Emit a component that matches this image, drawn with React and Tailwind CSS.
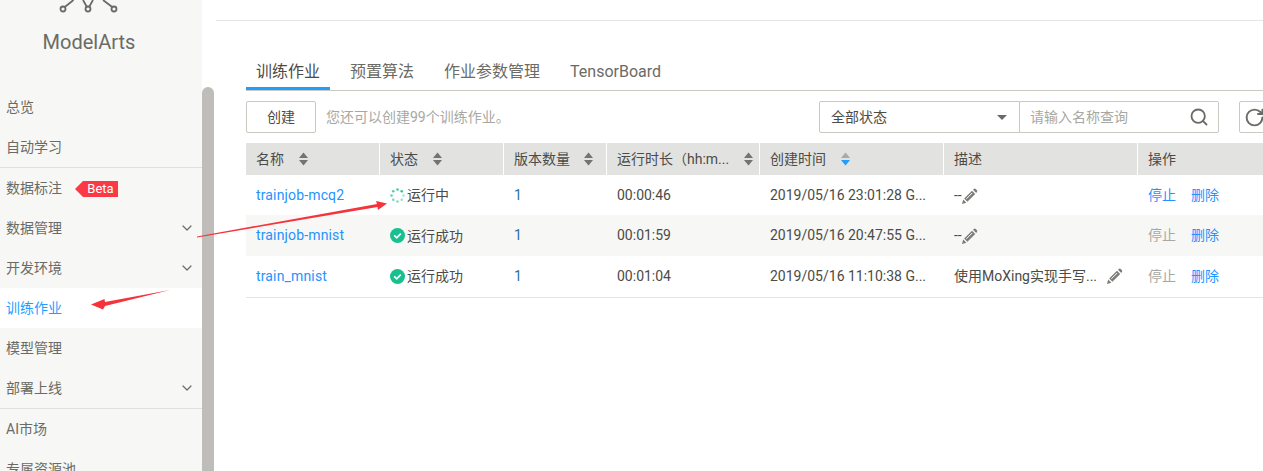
import React from "react";
import { ChevronDown, Search, RotateCw } from "lucide-react";

const FONT = "[font-family:Roboto,'Noto_Sans_CJK_SC',sans-serif]";

function MenuItem({ label, chevron, active, badge }) {
  return (
    <div className={`h-10 shrink-0 flex items-center pl-[6px] pr-[7px] text-[14px] ${active ? "bg-white text-[#1e9fff]" : "text-[#6b6b66]"}`}>
      <span>{label}</span>
      {badge && (
        <span className="ml-[13px] mt-[2px] flex items-center">
          <span className="w-0 h-0 border-y-[8px] border-y-transparent border-r-[8px] border-r-[#fc3a46]" />
          <span className="h-4 w-[35px] bg-[#fc3a46] text-white text-[13px] leading-4 text-center">Beta</span>
        </span>
      )}
      {chevron && <ChevronDown className="ml-auto text-[#6b6b66]" size={16} strokeWidth={1.8} />}
    </div>
  );
}

function SortIcon({ active }) {
  return (
    <svg width="9" height="14" viewBox="0 0 9 14" className="shrink-0">
      <path d="M4.5 0.5 L9 6 H0 Z" fill={active ? "#a9a9a5" : "#74746f"} />
      <path d="M4.5 13.5 L9 8 H0 Z" fill={active ? "#1e9fff" : "#74746f"} />
    </svg>
  );
}

function Pencil() {
  return (
    <svg width="17" height="17" viewBox="0 0 17 17" className="shrink-0">
      <path d="M1 16 L2.2 11.6 L5.4 14.8 Z" fill="#7c7c78" />
      <path d="M3.2 10.6 L11 2.8 L14.2 6 L6.4 13.8 Z" fill="#7c7c78" />
      <path d="M12 1.8 L13.2 0.8 Q14 0.3 14.7 1 L16 2.3 Q16.6 3 16 3.8 L15.2 5 Z" fill="#7c7c78" />
      <path d="M5.4 10.8 L11.2 5" stroke="#fff" strokeWidth="1" />
    </svg>
  );
}

function Spinner() {
  const dots = [0, 45, 90, 135, 180, 225, 270, 315];
  return (
    <svg width="15" height="15" viewBox="-7.5 -7.5 15 15" className="shrink-0">
      {dots.map((a, i) => (
        <circle key={a} r="1.3" cx={6 * Math.cos((a * Math.PI) / 180)} cy={6 * Math.sin((a * Math.PI) / 180)} fill="#16c89b" opacity={0.4 + i * 0.08} />
      ))}
    </svg>
  );
}

function Check() {
  return (
    <svg width="15" height="15" viewBox="0 0 15 15" className="shrink-0">
      <circle cx="7.5" cy="7.5" r="7.5" fill="#16c08f" />
      <path d="M4.2 7.4 L6.7 9.8 L10.8 5.6" fill="none" stroke="#fff" strokeWidth="1.7" />
    </svg>
  );
}

const COLS = "grid grid-cols-[133px_123px_102px_152px_183px_193px_126px] gap-x-px";

const HEADERS = [
  { t: "名称", gap: "ml-[15px]" },
  { t: "状态", gap: "ml-[15px]" },
  { t: "版本数量", gap: "ml-[14px]" },
  { t: "运行时长（hh:m...", gap: "ml-[15px]" },
  { t: "创建时间", gap: "ml-[15px]", active: true },
  { t: "描述" },
  { t: "操作" },
];

const ROWS = [
  { name: "trainjob-mcq2", status: "运行中", run: true, dur: "00:00:46", time: "2019/05/16 23:01:28 G...", desc: "--", stop: true, h: "h-10" },
  { name: "trainjob-mnist", status: "运行成功", statusShift: "mt-px", dur: "00:01:59", time: "2019/05/16 20:47:55 G...", desc: "--", h: "h-[41px] pb-px", bg: "bg-[#f7f7f5]" },
  { name: "train_mnist", status: "运行成功", dur: "00:01:04", time: "2019/05/16 11:10:38 G...", desc: "使用MoXing实现手写...", long: true, h: "h-[41px] pb-px" },
];

export default function App() {
  return (
    <div className={`w-[1263px] h-[471px] relative overflow-hidden bg-white flex ${FONT}`}>
      {/* Sidebar */}
      <div className="w-[202px] h-full shrink-0 bg-[#f7f7f5] flex flex-col overflow-hidden">
        <div className="h-[87px] shrink-0 flex flex-col items-center pr-[24px]">
          <svg width="64" height="13" viewBox="0 0 64 13" className="ml-[2px]">
            <g fill="none" stroke="#6b6b66" strokeWidth="1.8">
              <circle cx="5" cy="9" r="2.5" />
              <circle cx="30" cy="9" r="2.5" />
              <circle cx="56" cy="9" r="2.5" />
              <path d="M6.8 7 L15.5 0 M28.8 6.8 L25 0 M31.2 6.8 L35 0 M54.2 7 L45 0" />
            </g>
          </svg>
          <div className="text-[20px] leading-7 text-[#6b6b66] mt-[15px]">ModelArts</div>
        </div>
        <MenuItem label="总览" />
        <MenuItem label="自动学习" />
        <div className="h-px shrink-0 bg-[#e0e0de]" />
        <MenuItem label="数据标注" badge />
        <MenuItem label="数据管理" chevron />
        <MenuItem label="开发环境" chevron />
        <MenuItem label="训练作业" active />
        <MenuItem label="模型管理" />
        <MenuItem label="部署上线" chevron />
        <div className="h-px shrink-0 bg-[#e0e0de]" />
        <MenuItem label="AI市场" />
        <MenuItem label="专属资源池" />
      </div>

      {/* Scrollbar */}
      <div className="w-3 shrink-0 mt-[87px] bg-[#bfbdba] rounded-t-[6px]" />

      {/* Main */}
      <div className="flex-1 min-w-0 ml-[2px] flex flex-col">
        <div className="h-5 shrink-0 border-b border-[#e5e5e3] box-content" />
        <div className="pl-[30px] flex flex-col">
          {/* Tabs */}
          <div className="mt-[30px] h-[40px] flex gap-[10px] border-b border-[#ccc9c3] text-[16px] box-border">
            <div className="h-[39px] pt-[9px] px-[10px] leading-[24px] text-[#4b4b47] border-b-[3px] border-[#1e9fff]">训练作业</div>
            <div className="px-[10px] pt-[9px] leading-[24px] text-[#6b6b66]">预置算法</div>
            <div className="px-[10px] pt-[9px] leading-[24px] text-[#6b6b66]">作业参数管理</div>
            <div className="px-[10px] pt-[9px] leading-[24px] text-[#6b6b66]">TensorBoard</div>
          </div>

          {/* Toolbar */}
          <div className="mt-[10px] h-8 flex items-center">
            <div className="w-[70px] h-8 border border-[#ccc9c3] rounded-[2px] flex items-center justify-center text-[14px] text-[#4b4b47]">创建</div>
            <div className="ml-[10px] text-[14px] text-[#a8a8a3]">您还可以创建99个训练作业。</div>
            <div className="ml-auto flex items-center">
              <div className="w-[201px] h-8 border border-[#ccc9c3] rounded-l-[2px] flex items-center pl-[11px] pr-[12px] text-[14px] text-[#4b4b47]">
                <span>全部状态</span>
                <span className="ml-auto w-0 h-0 border-x-[5px] border-x-transparent border-t-[5px] border-t-[#6b6b66]" />
              </div>
              <div className="w-[200px] h-8 border border-[#ccc9c3] rounded-[2px] -ml-px flex items-center pl-[10px] pr-[9px] text-[14px] text-[#a8a8a3]">
                <span>请输入名称查询</span>
                <Search className="ml-auto text-[#6b6b66]" size={20} strokeWidth={2.2} />
              </div>
              <div className="w-[32px] h-8 ml-[20px] -mr-[8px] border border-[#ccc9c3] rounded-[2px] flex items-center pl-[4px] text-[#6b6b66] bg-white overflow-hidden">
                <RotateCw className="shrink-0" size={21} strokeWidth={2.2} />
              </div>
            </div>
          </div>

          {/* Table */}
          <div className="mt-[10px] w-[1017px] overflow-hidden text-[14px] leading-5">
            <div className={`${COLS} h-8 bg-white`}>
              {HEADERS.map((h) => (
                <div key={h.t} className="bg-[#e2e3e1] pl-[10px] flex items-center text-[#4b4b47] whitespace-nowrap">
                  <span>{h.t}</span>
                  {h.gap && <span className={`${h.gap} flex`}><SortIcon active={h.active} /></span>}
                </div>
              ))}
            </div>
            {ROWS.map((r) => (
              <div key={r.name} className={`${COLS} ${r.h} ${r.bg || ""} items-center whitespace-nowrap text-[#4b4b47]`}>
                <div className="pl-[10px] text-[#1f93ff] tracking-[0.15px]">{r.name}</div>
                <div className={`pl-[10px] flex items-center gap-[2px] ${r.statusShift || ""}`}>
                  {r.run ? <Spinner /> : <Check />}
                  <span>{r.status}</span>
                </div>
                <div className="pl-[10px] text-[#2f6f9f]">1</div>
                <div className="pl-[10px]">{r.dur}</div>
                <div className="pl-[10px]">{r.time}</div>
                <div className="pl-[10px] flex items-center">
                  <span>{r.desc}</span>
                  <span className={r.long ? "ml-[9px]" : "ml-[-1px] mt-[2px]"}><Pencil /></span>
                </div>
                <div className="pl-[10px] flex gap-[15px]">
                  <span className={r.stop ? "text-[#1f93ff]" : "text-[#a8a8a3]"}>停止</span>
                  <span className="text-[#1f93ff]">删除</span>
                </div>
              </div>
            ))}
            <div className="h-px bg-[#e5e5e3]" />
          </div>
        </div>
      </div>

      {/* Red annotation arrows over the screenshot */}
      <svg className="absolute inset-0 pointer-events-none" width="1263" height="471" viewBox="0 0 1263 471">
        <path d="M197 236.5 L377 204 L376 201 L387 203.5 L378 210 L377.5 207 L197 237.5 Z" fill="#f5333b" />
        <path d="M170 290 L105 302 L104.5 299 L91 304.5 L103 309.5 L105 306 Z" fill="#f5333b" />
      </svg>
    </div>
  );
}
